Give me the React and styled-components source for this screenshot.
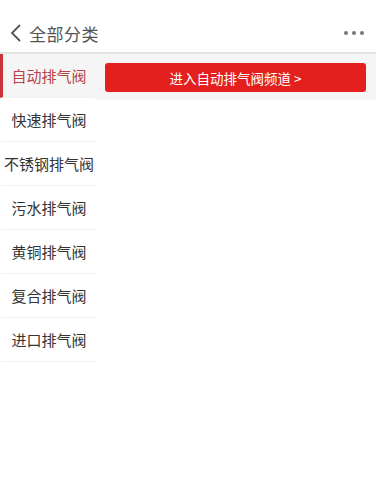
import React, { useState } from "react";
import styled, { createGlobalStyle } from "styled-components";

const GlobalStyle = createGlobalStyle`
  html, body {
    margin: 0;
    padding: 0;
    background: #fff;
    font-family: "Noto Sans CJK SC", "Noto Sans", sans-serif;
  }
`;

const categories = [
  "自动排气阀",
  "快速排气阀",
  "不锈钢排气阀",
  "污水排气阀",
  "黄铜排气阀",
  "复合排气阀",
  "进口排气阀",
];

function App() {
  const [active, setActive] = useState(0);

  return (
    <>
      <GlobalStyle />
      <Page>
        <Header>
          <Back>
            <svg width="14" height="20" viewBox="0 0 14 20">
              <path d="M11 2 L3 10 L11 18" fill="none" stroke="#555" strokeWidth="1.8" />
            </svg>
            <Title>全部分类</Title>
          </Back>
          <More>
            <Dot />
            <Dot />
            <Dot />
          </More>
        </Header>
        <Body>
          <Sidebar>
            {categories.map((name, i) => (
              <Item key={name} $active={i === active} onClick={() => setActive(i)}>
                {name}
              </Item>
            ))}
          </Sidebar>
          <Content>
            <Banner>
              <ChannelButton>进入{categories[active]}频道 &gt;</ChannelButton>
            </Banner>
          </Content>
        </Body>
      </Page>
    </>
  );
}

const Page = styled.div`
  width: 376px;
  min-height: 501px;
  background: #fff;
`;

const Header = styled.header`
  height: 54px;
  display: flex;
  align-items: center;
  justify-content: space-between;
  padding: 14px 11px 0 9px;
  box-sizing: border-box;
  border-bottom: 2px solid #e4e4e4;
`;

const Back = styled.div`
  display: flex;
  align-items: center;
  gap: 6px;
`;

const Title = styled.span`
  font-size: 17px;
  color: #555;
  letter-spacing: 0.5px;
`;

const More = styled.div`
  display: flex;
  gap: 4px;
  padding-right: 1px;
`;

const Dot = styled.span`
  width: 4px;
  height: 4px;
  border-radius: 50%;
  background: #777;
`;

const Body = styled.div`
  display: flex;
`;

const Sidebar = styled.ul`
  list-style: none;
  margin: 0;
  padding: 0;
  width: 95px;
  flex-shrink: 0;
`;

const Item = styled.li`
  height: 44px;
  display: flex;
  align-items: center;
  justify-content: center;
  box-sizing: border-box;
  font-size: 15px;
  white-space: nowrap;
  overflow: hidden;
  color: ${(p) => (p.$active ? "#b8444a" : "#333")};
  background: ${(p) => (p.$active ? "#f5f5f5" : "#fff")};
  border-left: 3px solid ${(p) => (p.$active ? "#c8343a" : "transparent")};
  border-bottom: 1px solid #f0f0f0;
  cursor: pointer;
`;

const Content = styled.div`
  flex: 1;
`;

const Banner = styled.div`
  background: #f5f5f5;
  height: 46px;
  padding: 9px 10px 0 10px;
  box-sizing: border-box;
`;

const ChannelButton = styled.button`
  width: 100%;
  height: 29px;
  border: none;
  border-radius: 3px;
  background: #e3201e;
  color: #fff;
  font-family: inherit;
  font-size: 13.5px;
  cursor: pointer;
`;

export default App;
